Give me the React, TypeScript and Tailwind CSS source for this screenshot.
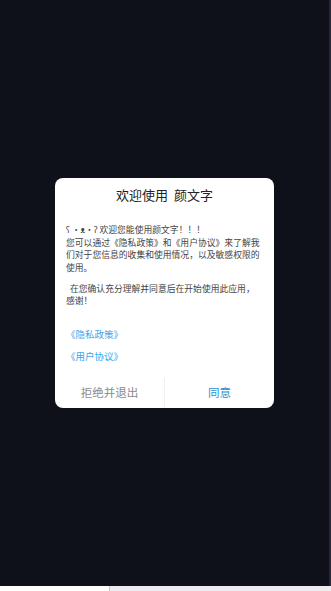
import React from 'react';

const cjk = { fontFamily: '"Noto Sans CJK SC", "Noto Sans", sans-serif' };

const PrivacyDialog: React.FC = () => {
  return (
    <div className="w-[219px] rounded-[8px] bg-white flex flex-col overflow-hidden" style={cjk}>
      <div className="h-[34px] flex items-center justify-center text-[13px] text-[#222] whitespace-pre">
        欢迎使用  颜文字
      </div>
      <div className="px-[11px] mt-[12px] text-[8.8px] leading-[12.7px] text-[#444]">
        <p>ʕ •ᴥ•ʔ 欢迎您能使用颜文字！！！</p>
        <p>您可以通过《隐私政策》和《用户协议》来了解我们对于您信息的收集和使用情况，以及敏感权限的使用。</p>
        <p className="mt-[8px]">&nbsp;&nbsp;在您确认充分理解并同意后在开始使用此应用，感谢！</p>
      </div>
      <div className="px-[11px] mt-[19px] text-[9.5px] leading-[14px] text-[#3ea3ec]">
        <p>《隐私政策》</p>
        <p className="mt-[8px]">《用户协议》</p>
      </div>
      <div className="mt-[15px] h-[30px] flex text-[11.5px]">
        <button className="flex-1 flex items-center justify-center text-[#8a8a8a]">拒绝并退出</button>
        <div className="w-px bg-[#f0f0f0]" />
        <button className="flex-1 flex items-center justify-center text-[#2f8fd2]">同意</button>
      </div>
    </div>
  );
};

export default function App() {
  return (
    <div className="w-[331px] h-[591px] flex flex-col bg-[#0e111a]">
      <div className="h-[586px] flex">
        <div className="flex-1 flex items-center justify-center">
          <PrivacyDialog />
        </div>
        <div className="w-[2px] bg-[#262636]" />
      </div>
      <div className="flex-1 flex">
        <div className="w-[109px] bg-white" />
        <div className="w-px bg-[#c8c8cc]" />
        <div className="flex-1 bg-[#ededf0]" />
      </div>
    </div>
  );
}
